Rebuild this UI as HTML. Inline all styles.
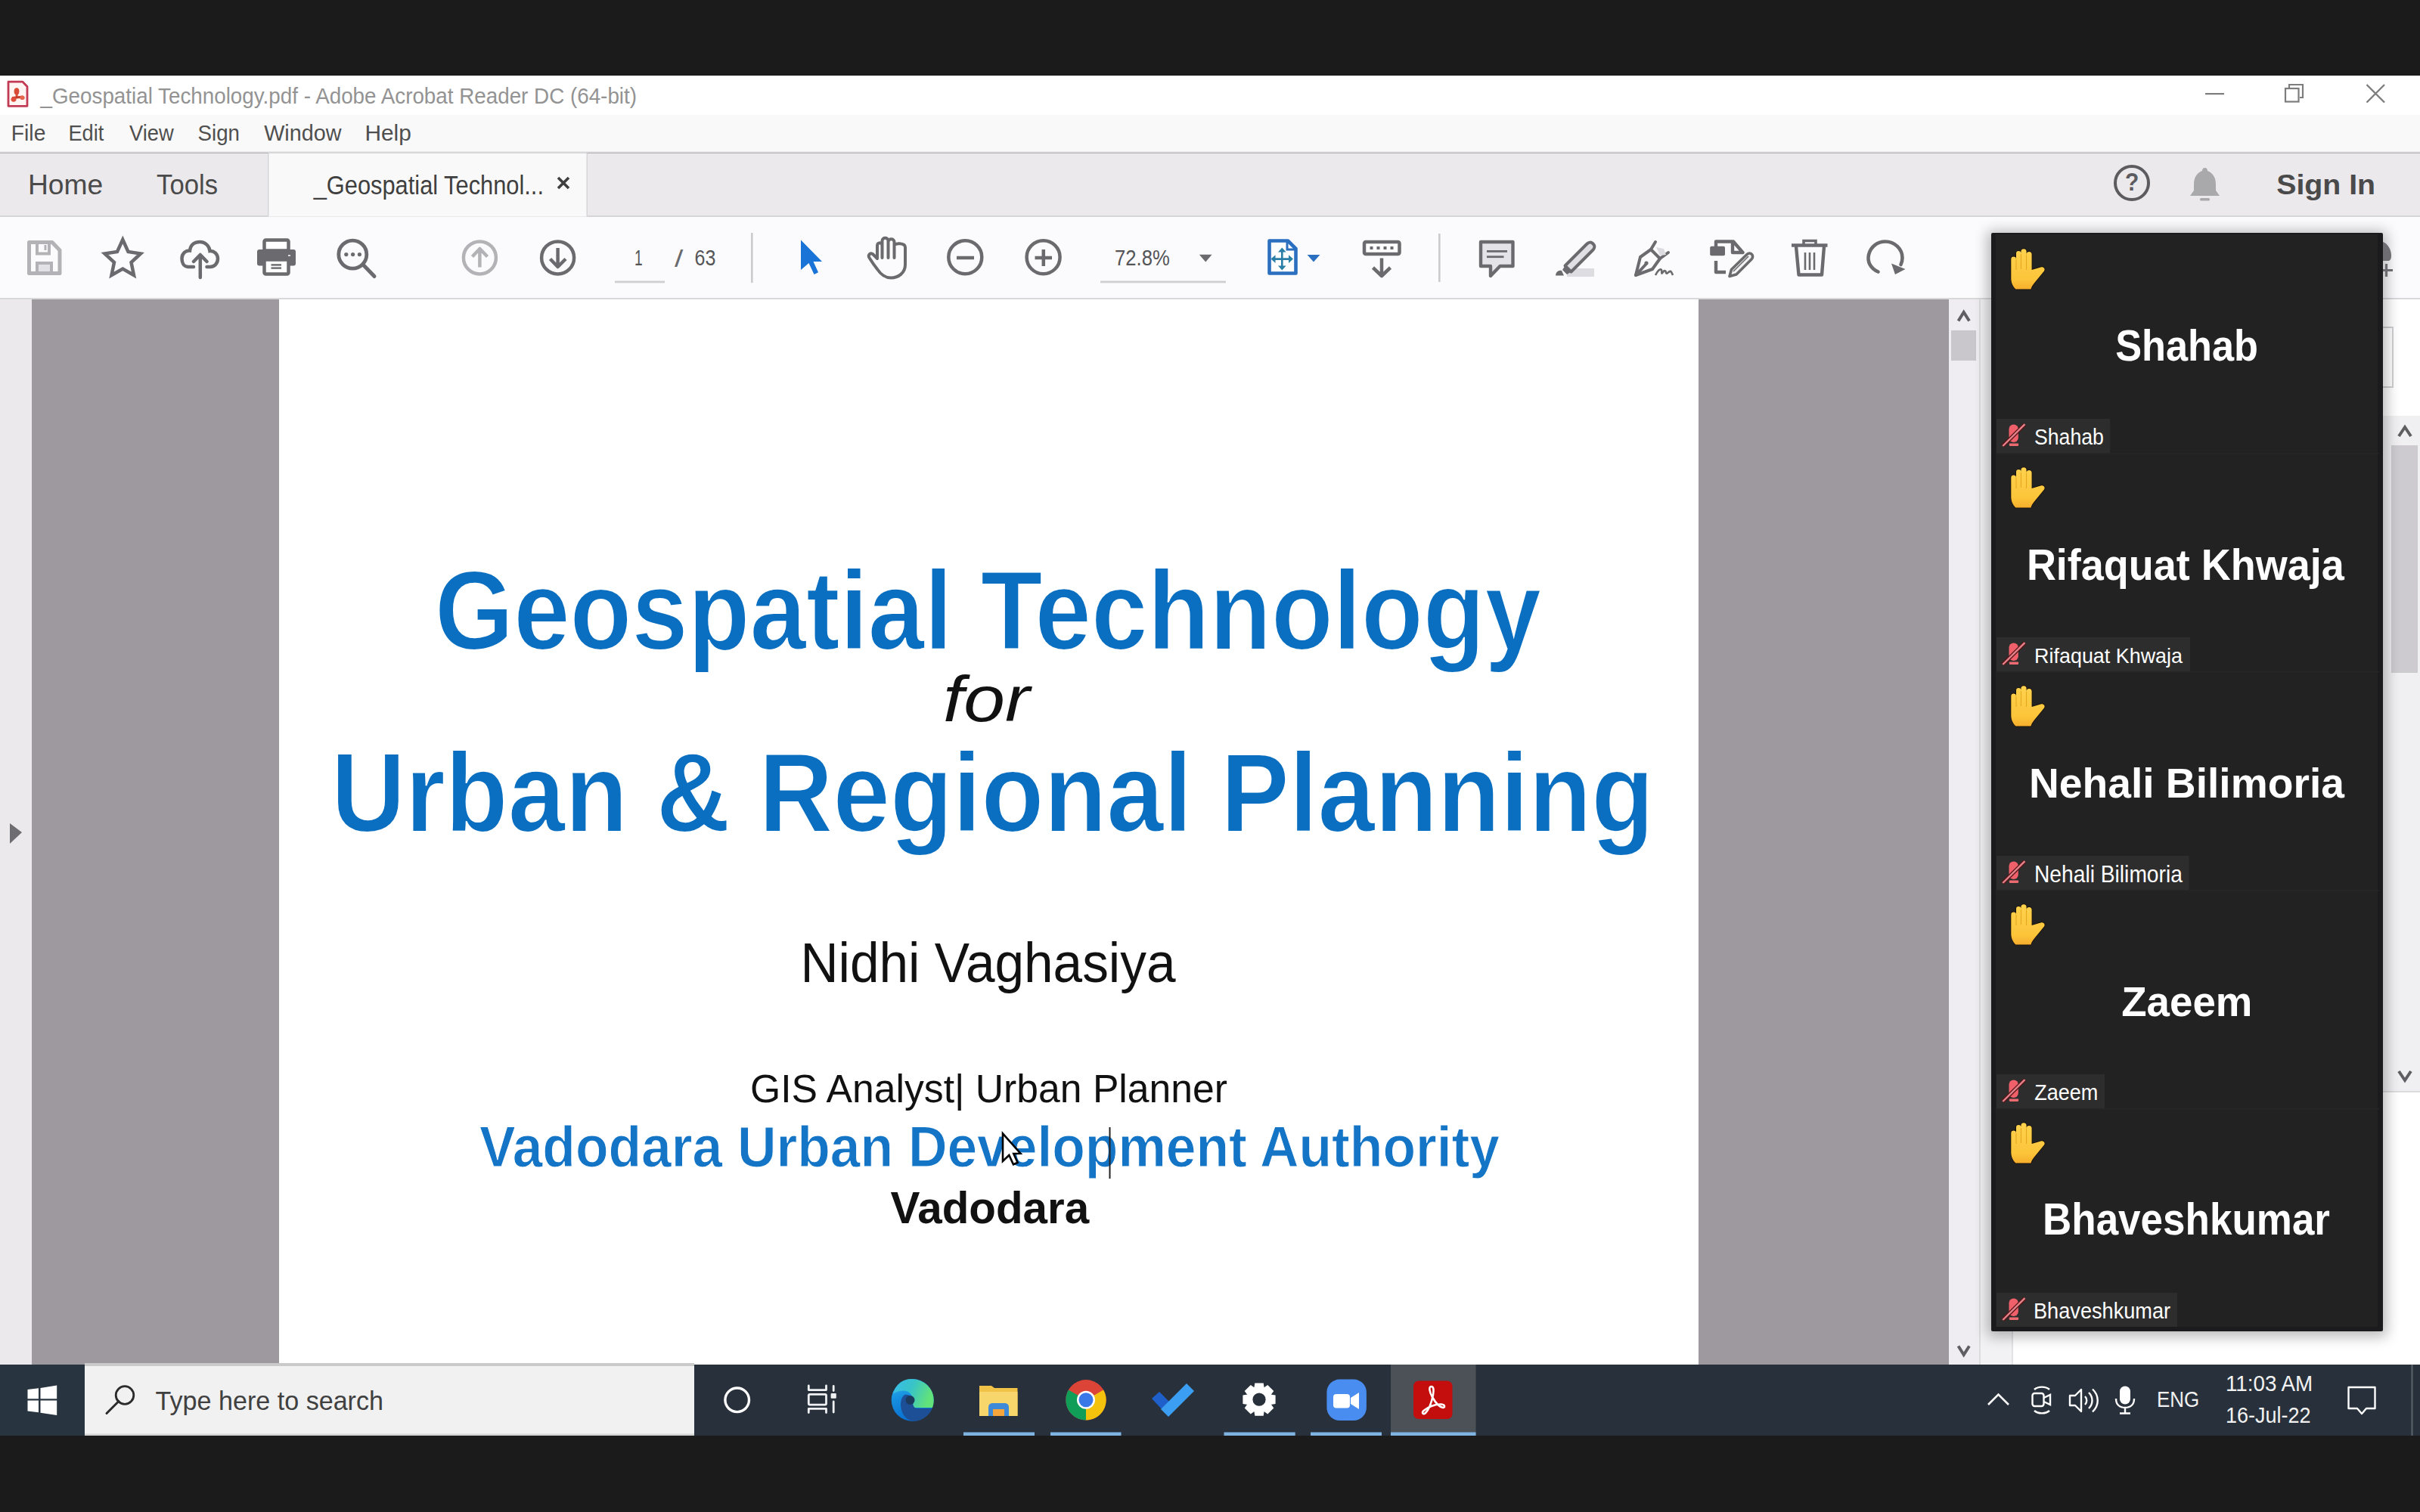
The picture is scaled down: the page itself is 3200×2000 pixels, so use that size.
<!DOCTYPE html>
<html><head><meta charset="utf-8"><style>
html,body{margin:0;padding:0;width:3200px;height:2000px;overflow:hidden;background:#1b1b1b;}
svg{display:block;font-family:"Liberation Sans",sans-serif;}
</style></head><body>
<svg width="3200" height="2000" viewBox="0 0 3200 2000">
<rect x="0" y="0" width="3200" height="2000" fill="#1b1b1b"/>
<rect x="0" y="100" width="3200" height="52" fill="#ffffff"/>
<rect x="0" y="152" width="3200" height="49" fill="#f9f9f9"/>
<rect x="0" y="200.5" width="3200" height="2" fill="#d9d8db"/>
<rect x="0" y="202.5" width="3200" height="83" fill="#ebe9ec"/>
<rect x="0" y="285" width="3200" height="2" fill="#d6d5d8"/>
<rect x="355" y="202.5" width="421" height="84" fill="#f9f9fa"/>
<rect x="354" y="202.5" width="1.5" height="84" fill="#d6d5d8"/>
<rect x="775.5" y="202.5" width="1.5" height="84" fill="#d6d5d8"/>
<rect x="0" y="287" width="3200" height="107" fill="#fbfbfd"/>
<rect x="0" y="394" width="3200" height="2" fill="#d8d7da"/>
<rect x="0" y="396" width="3200" height="1409" fill="#ffffff"/>
<rect x="0" y="396" width="42" height="1409" fill="#ebe9ec"/>
<rect x="42" y="396" width="2535" height="1409" fill="#9e999e"/>
<rect x="369" y="396" width="1877" height="1409" fill="#ffffff"/>
<rect x="2577" y="396" width="40" height="1409" fill="#efedf1"/>
<rect x="2617" y="396" width="2" height="1409" fill="#dcdbde"/>
<rect x="2619" y="396" width="41" height="1409" fill="#f2f1f4"/>
<rect x="2660" y="396" width="2" height="1409" fill="#e2e1e4"/>
<rect x="2580" y="437" width="33" height="40" fill="#c9c7cc"/>
<path d="M2589.5,424.5 L2596.7,413 L2604,424.5" fill="none" stroke="#5f5f63" stroke-width="4"/>
<path d="M2589.5,1780.5 L2596.7,1792 L2604,1780.5" fill="none" stroke="#5f5f63" stroke-width="4"/>
<path d="M13,1089 L29,1101 L13,1116 Z" fill="#6e6d71"/>
<rect x="3150" y="550" width="50" height="893" fill="#f0eff2"/>
<rect x="3162" y="589" width="35" height="301" fill="#cdcbd0"/>
<path d="M3172,577 L3180,565 L3188,577" fill="none" stroke="#5f5f63" stroke-width="4"/>
<path d="M3172,1417 L3180,1429 L3188,1417" fill="none" stroke="#5f5f63" stroke-width="4"/>
<rect x="3150" y="1443" width="50" height="2" fill="#dcdbde"/>
<rect x="3150" y="433" width="14" height="79" fill="none" stroke="#d0cfd2" stroke-width="2"/>
<text x="575.0" y="859.0" font-size="147.56" font-weight="bold" font-style="normal" fill="#0a6fc0" textLength="1463.0" lengthAdjust="spacingAndGlyphs" stroke="#ffffff" stroke-width="2">Geospatial Technology</text>
<text x="1247.0" y="954.0" font-size="85.52" font-weight="normal" font-style="italic" fill="#111111" textLength="114.7" lengthAdjust="spacingAndGlyphs" >for</text>
<text x="438.0" y="1100.0" font-size="148.26" font-weight="bold" font-style="normal" fill="#0a6fc0" textLength="1749.2" lengthAdjust="spacingAndGlyphs" stroke="#ffffff" stroke-width="2">Urban &amp; Regional Planning</text>
<text x="1058.5" y="1298.5" font-size="73.40" font-weight="normal" font-style="normal" fill="#111111" textLength="496.0" lengthAdjust="spacingAndGlyphs" >Nidhi Vaghasiya</text>
<text x="992.0" y="1458.0" font-size="51.58" font-weight="normal" font-style="normal" fill="#111111" textLength="631.0" lengthAdjust="spacingAndGlyphs" >GIS Analyst| Urban Planner</text>
<text x="634.0" y="1542.5" font-size="75.58" font-weight="bold" font-style="normal" fill="#1474c6" textLength="1349.0" lengthAdjust="spacingAndGlyphs" stroke="#ffffff" stroke-width="1">Vadodara Urban Development Authority</text>
<text x="1177.5" y="1618.0" font-size="59.59" font-weight="bold" font-style="normal" fill="#111111" textLength="262.6" lengthAdjust="spacingAndGlyphs" >Vadodara</text>
<rect x="1466.5" y="1491" width="2" height="68" fill="#222"/>
<rect x="0" y="1805" width="3200" height="94" fill="#28313b"/>
<rect x="0" y="1805" width="112" height="94" fill="#28343f"/>
<rect x="112" y="1803" width="806" height="96" fill="#f1f1f1"/>
<rect x="112" y="1803" width="806" height="4" fill="#cacaca"/>
<rect x="112" y="1896.5" width="806" height="2.5" fill="#d4d4d4"/>
<path d="M11,108.2 L30,108.2 L36,114.5 L36,140.3 L11,140.3 Z" fill="#fff5f3" stroke="#c23b55" stroke-width="2.8" stroke-linejoin="round"/>
<ellipse cx="22" cy="120.8" rx="3.4" ry="4.6" fill="#d84b35"/><rect x="20.6" y="123" width="3" height="6.5" fill="#d84b35"/>
<path d="M16,129.5 L30.5,128.2" stroke="#c8402c" stroke-width="3.2"/>
<ellipse cx="18" cy="131.6" rx="3.5" ry="3.1" fill="#e0503c"/><ellipse cx="29.5" cy="129.2" rx="3.2" ry="2.8" fill="#e6644c"/>
<text x="53.5" y="137.2" font-size="29.23" font-weight="normal" font-style="normal" fill="#939393" textLength="788.5" lengthAdjust="spacingAndGlyphs" >_Geospatial Technology.pdf - Adobe Acrobat Reader DC (64-bit)</text>
<rect x="2916" y="123" width="25" height="2.2" fill="#7d7d7d"/>
<rect x="3022" y="117" width="17.5" height="17.5" fill="none" stroke="#7d7d7d" stroke-width="2.2"/>
<path d="M3027,116 L3027,112 L3045,112 L3045,129 L3041,129" fill="none" stroke="#7d7d7d" stroke-width="2.2"/>
<path d="M3129.5,112 L3153,135.5 M3153,112 L3129.5,135.5" stroke="#7d7d7d" stroke-width="2.4"/>
<text x="14.8" y="186.2" font-size="29.80" font-weight="normal" font-style="normal" fill="#4f4f4f" textLength="45.6" lengthAdjust="spacingAndGlyphs" >File</text>
<text x="90.4" y="186.2" font-size="29.80" font-weight="normal" font-style="normal" fill="#4f4f4f" textLength="46.9" lengthAdjust="spacingAndGlyphs" >Edit</text>
<text x="171.0" y="186.2" font-size="29.80" font-weight="normal" font-style="normal" fill="#4f4f4f" textLength="58.7" lengthAdjust="spacingAndGlyphs" >View</text>
<text x="261.6" y="186.2" font-size="29.37" font-weight="normal" font-style="normal" fill="#4f4f4f" textLength="55.4" lengthAdjust="spacingAndGlyphs" >Sign</text>
<text x="349.2" y="186.2" font-size="29.80" font-weight="normal" font-style="normal" fill="#4f4f4f" textLength="102.3" lengthAdjust="spacingAndGlyphs" >Window</text>
<text x="482.4" y="186.2" font-size="29.80" font-weight="normal" font-style="normal" fill="#4f4f4f" textLength="61.4" lengthAdjust="spacingAndGlyphs" >Help</text>
<text x="36.9" y="256.7" font-size="37.50" font-weight="normal" font-style="normal" fill="#4a4a4a" textLength="99.3" lengthAdjust="spacingAndGlyphs" >Home</text>
<text x="207.1" y="256.7" font-size="37.50" font-weight="normal" font-style="normal" fill="#4a4a4a" textLength="81.0" lengthAdjust="spacingAndGlyphs" >Tools</text>
<text x="414.7" y="256.7" font-size="34.53" font-weight="normal" font-style="normal" fill="#3f3f3f" textLength="304.3" lengthAdjust="spacingAndGlyphs" >_Geospatial Technol...</text>
<path d="M738,235 L752,249 M752,235 L738,249" stroke="#3f3f3f" stroke-width="3.6"/>
<text x="3010.2" y="257.0" font-size="37.25" font-weight="bold" font-style="normal" fill="#4a4a4a" textLength="130.9" lengthAdjust="spacingAndGlyphs" >Sign In</text>
<circle cx="2819" cy="242" r="22" fill="none" stroke="#5c5c60" stroke-width="4"/>
<text x="2810.0" y="252.0" font-size="32.95" font-weight="bold" font-style="normal" fill="#5c5c60" textLength="18.3" lengthAdjust="spacingAndGlyphs" >?</text>
<path d="M2915.5,222 C2913,222 2912,224 2912,226 C2904,229 2901,236 2901,244 L2901,252 L2896,259 L2935,259 L2930,252 L2930,244 C2930,236 2927,229 2919,226 C2919,224 2918,222 2915.5,222 Z" fill="#a9a8ab"/>
<rect x="2909" y="262" width="13" height="3.5" rx="1.5" fill="#a9a8ab"/>
<path d="M38.5,320.5 L69,320.5 L79,331 L79,361.5 L38.5,361.5 Z" fill="none" stroke="#b3b2b6" stroke-width="5" stroke-linejoin="round"/>
<rect x="49" y="320" width="16" height="15.5" fill="none" stroke="#b3b2b6" stroke-width="4"/>
<rect x="58.5" y="324" width="3" height="7" fill="#b3b2b6"/>
<rect x="49" y="348" width="19" height="13" fill="#e2e1e5" stroke="#b3b2b6" stroke-width="4"/>
<path d="M162.3,317 L169.5,333 L186,335.5 L173.5,347 L177,364 L162.3,355.5 L147.5,364 L151,347 L138.5,335.5 L155,333 Z" fill="none" stroke="#6b6b6f" stroke-width="4.5" stroke-linejoin="miter"/>
<path d="M256,353 L249,353 C242,353 240.5,346 240.5,342 C240.5,335 246,331 251,331.5 C252,323 258,320 264,320 C272,320 277,326 277.5,332 C283,331.5 288,336 288,342 C288,348 284,353 278,353 L273.5,353" fill="none" stroke="#6b6b6f" stroke-width="4.5" stroke-linecap="round"/>
<path d="M264.8,367 L264.8,338 M256,346 L264.8,337 L273.5,346" fill="none" stroke="#6b6b6f" stroke-width="4.5" stroke-linecap="round" stroke-linejoin="round"/>
<rect x="349.5" y="317.5" width="32" height="14" rx="2" fill="#fff" stroke="#6b6b6f" stroke-width="4.5"/>
<rect x="340" y="330" width="51" height="21.5" rx="3" fill="#6b6b6f"/>
<rect x="349.5" y="343.5" width="32" height="19" rx="2" fill="#fff" stroke="#6b6b6f" stroke-width="4.5"/>
<rect x="358.5" y="349.2" width="13.5" height="2.4" fill="#6b6b6f"/><rect x="358.5" y="353.4" width="13.5" height="2.4" fill="#6b6b6f"/>
<rect x="381" y="337" width="3" height="2" fill="#ddd"/>
<circle cx="466.3" cy="336.6" r="18.5" fill="none" stroke="#6b6b6f" stroke-width="4.8"/>
<path d="M480,350 L495,365.5" stroke="#6b6b6f" stroke-width="5" stroke-linecap="round"/>
<circle cx="457.8" cy="336.6" r="2.6" fill="#6b6b6f"/><circle cx="466.6" cy="336.6" r="2.6" fill="#6b6b6f"/><circle cx="475.4" cy="336.6" r="2.6" fill="#6b6b6f"/>
<circle cx="634.4" cy="340.9" r="21.5" fill="none" stroke="#b3b2b6" stroke-width="4.5"/>
<path d="M634.4,353.5 L634.4,329 M624.5,339.5 L634.4,329 L644.5,339.5" fill="none" stroke="#b3b2b6" stroke-width="4.5" stroke-linejoin="round"/>
<circle cx="737.6" cy="340.9" r="21.5" fill="none" stroke="#6b6b6f" stroke-width="4.5"/>
<path d="M737.6,328 L737.6,353 M727.5,342.5 L737.6,353 L748,342.5" fill="none" stroke="#6b6b6f" stroke-width="4.5" stroke-linejoin="round"/>
<text x="839.0" y="350.9" font-size="30.38" font-weight="normal" font-style="normal" fill="#555558" textLength="10.7" lengthAdjust="spacingAndGlyphs" >1</text>
<text x="892.0" y="352.7" font-size="31.31" font-weight="normal" font-style="normal" fill="#6a6a6e" textLength="11.3" lengthAdjust="spacingAndGlyphs" >/</text>
<text x="918.5" y="350.6" font-size="30.23" font-weight="normal" font-style="normal" fill="#555558" textLength="27.8" lengthAdjust="spacingAndGlyphs" >63</text>
<rect x="813" y="371.5" width="66" height="2.8" fill="#cfced3"/>
<rect x="993" y="308" width="2.6" height="66" fill="#cbcacf"/>
<rect x="1902" y="309" width="2.6" height="64" fill="#cbcacf"/>
<path d="M1059,317.5 L1059,357 L1069.5,348 L1076.5,363 L1082,360.3 L1075.5,346 L1087,346 Z" fill="#1a73d6"/>
<path d="M1160,356 C1156,351 1152,345 1149.5,341 C1147.5,337.5 1150,334 1154,336 L1160,342 L1160,325 C1160,320 1166.5,320 1166.5,325 L1166.5,341 L1166.5,318.5 C1166.5,313.5 1174.5,313.5 1174.5,318.5 L1174.5,341 L1174.5,320 C1174.5,315 1182.5,315 1182.5,320 L1182.5,341 L1182.5,325 C1182.5,321 1197,321 1197,327 L1197,350 C1197,361 1188,367.5 1178,367.5 C1170,367.5 1164,362 1160,356 Z" fill="none" stroke="#6b6b6f" stroke-width="4" stroke-linejoin="round"/>
<circle cx="1276.3" cy="340.2" r="22" fill="none" stroke="#6b6b6f" stroke-width="4.5"/>
<path d="M1265,341 L1288,341" stroke="#6b6b6f" stroke-width="4.5"/>
<circle cx="1379.6" cy="340.2" r="22" fill="none" stroke="#6b6b6f" stroke-width="4.5"/>
<path d="M1368.5,341 L1391,341 M1379.8,330 L1379.8,352" stroke="#6b6b6f" stroke-width="4.5"/>
<text x="1474.1" y="350.6" font-size="30.23" font-weight="normal" font-style="normal" fill="#555558" textLength="72.7" lengthAdjust="spacingAndGlyphs" >72.8%</text>
<path d="M1585.8,336.7 L1602.6,336.7 L1594.2,346.6 Z" fill="#6b6b6f"/>
<rect x="1455" y="371.5" width="166" height="2.8" fill="#cfced3"/>
<path d="M1678.5,318.5 L1703,318.5 L1713.5,329 L1713.5,361.5 L1678.5,361.5 Z" fill="#fff" stroke="#2a6fc0" stroke-width="4.6" stroke-linejoin="round"/>
<path d="M1702,318.5 L1702,330 L1713.5,330" fill="none" stroke="#2a6fc0" stroke-width="3"/>
<path d="M1695.3,331 L1695.3,354 M1684,342.6 L1707,342.6" stroke="#2a7fa6" stroke-width="2.6"/>
<path d="M1690,333.5 L1695.3,327.5 L1700.6,333.5 Z M1690,351.5 L1695.3,357.5 L1700.6,351.5 Z M1686.5,337.3 L1680.5,342.6 L1686.5,347.9 Z M1704,337.3 L1710,342.6 L1704,347.9 Z" fill="#2a7fa6"/>
<path d="M1728.6,337 L1745.4,337 L1737,346.6 Z" fill="#2a6fc0"/>
<rect x="1804" y="320" width="46.5" height="16" rx="2" fill="#fff" stroke="#6b6b6f" stroke-width="4.5"/>
<rect x="1811.5" y="326" width="4" height="4" fill="#6b6b6f"/>
<rect x="1820.5" y="326" width="4" height="4" fill="#6b6b6f"/>
<rect x="1829.5" y="326" width="4" height="4" fill="#6b6b6f"/>
<rect x="1838.5" y="326" width="4" height="4" fill="#6b6b6f"/>
<path d="M1827,341.5 L1827,365 M1815.5,354 L1827,365 L1838.5,354" fill="none" stroke="#6b6b6f" stroke-width="4.5" stroke-linejoin="round"/>
<path d="M1958,320 L2000.5,320 L2000.5,352 L1983.5,352 L1971,365 L1971,352 L1958,352 Z" fill="#e4e3e8" stroke="#6b6b6f" stroke-width="4.4" stroke-linejoin="round"/>
<rect x="1966" y="331" width="27" height="2.8" fill="#6b6b6f"/><rect x="1966" y="338.3" width="22.5" height="2.8" fill="#6b6b6f"/>
<rect x="2072" y="355" width="36" height="11" fill="#dddce1"/>
<path d="M2069.5,351.5 L2098,323 C2101,320 2104,320 2106,322 L2107,323 C2109,325 2109,328 2106,331 L2077.5,359.5 Z" fill="#e0dfe4" stroke="#6b6b6f" stroke-width="4" stroke-linejoin="round"/>
<path d="M2069.5,351.5 L2077.5,359.5 L2072,363 L2066,357 Z" fill="#6b6b6f"/>
<path d="M2057,364.5 C2057,360 2061,356.5 2065,358 L2068,364.5 Z" fill="#6b6b6f"/>
<path d="M2163,364 L2169,340 L2183,330 L2195,342 L2185,356 Z" fill="none" stroke="#6b6b6f" stroke-width="4" stroke-linejoin="round"/>
<path d="M2163,364 L2176,350 M2183,330 L2189,320 M2195,342 L2206,334" fill="none" stroke="#6b6b6f" stroke-width="4" stroke-linecap="round"/>
<circle cx="2177" cy="348" r="2.6" fill="#6b6b6f"/>
<path d="M2190,327 L2200,329 L2203,337 L2195,338 Z" fill="#dddce1"/>
<path d="M2189,364 C2192,358 2195,355 2197,357 C2198,360 2196,364 2199,360 C2201,357 2203,358 2203,361 C2204,363 2206,360 2208,359 C2210,358 2211,362 2212,364" fill="none" stroke="#6b6b6f" stroke-width="2.6"/>
<path d="M2269,326 L2269,319.5 L2292,319.5 L2304.5,334 L2291,334 L2291,319.5" fill="none" stroke="#6b6b6f" stroke-width="4.4" stroke-linejoin="round"/>
<path d="M2269,345 L2269,360 L2282,360" fill="none" stroke="#6b6b6f" stroke-width="4.4" stroke-linejoin="round"/>
<rect x="2261.2" y="325.8" width="19.8" height="12.5" rx="2" fill="#6b6b6f"/>
<path d="M2287,365.5 L2289.5,356.5 L2310,336.5 C2312,334.5 2315,334.5 2316.5,336.5 C2318,338 2318,341 2316,343 L2296,363 Z" fill="#f2f2f4" stroke="#6b6b6f" stroke-width="3.6" stroke-linejoin="round"/>
<path d="M2292,359 L2312,339" stroke="#6b6b6f" stroke-width="1.6"/>
<path d="M2369,324.5 L2416.5,324.5" stroke="#6b6b6f" stroke-width="4.4"/>
<path d="M2385,323 L2385,318.5 L2401,318.5 L2401,323" fill="none" stroke="#6b6b6f" stroke-width="3.6"/>
<path d="M2375,326 L2378.5,363.5 L2409,363.5 L2412,326" fill="none" stroke="#6b6b6f" stroke-width="4.4" stroke-linejoin="round"/>
<path d="M2387,334 L2387,357 M2393,334 L2393,357 M2399,334 L2399,357" stroke="#6b6b6f" stroke-width="2.6"/>
<path d="M2483.5,359.5 C2473,355 2469,346 2471,337 C2473.5,326 2483,319.5 2493,319.5 C2505.5,319.5 2515.5,329.5 2515.5,341 C2515.5,344 2515,347 2513.5,350" fill="none" stroke="#6b6b6f" stroke-width="4.6" stroke-linecap="round"/>
<path d="M2501,348.5 L2519.5,356 L2506,363 Z" fill="#6b6b6f"/>
<defs><filter id="shadow" x="-10%" y="-10%" width="120%" height="120%"><feGaussianBlur stdDeviation="9"/></filter><linearGradient id="handg" x1="0" y1="0" x2="0" y2="1"><stop offset="0" stop-color="#ffd24e"/><stop offset="0.75" stop-color="#fcc53a"/><stop offset="1" stop-color="#f6ae2c"/></linearGradient><symbol id="hand" viewBox="0 0 46 56" overflow="visible"><path d="M7.3,54.6 C3.5,50.5 1.3,46 1.3,40 L1.3,14.9 A3.35,3.35 0 0 1 8,14.9 L8,7.3 A3.2,3.2 0 0 1 14.4,7.3 L14.4,4.8 A3.6,3.6 0 0 1 21.6,4.8 L21.6,8.5 A3.5,3.5 0 0 1 28.6,8.5 L28.6,29 L40.5,25.5 C44,24.5 47,27.5 45,30.5 L31.5,47 C29.5,49.5 28,52 27.5,54.6 Z" fill="url(#handg)" stroke="#140c04" stroke-width="1.4" stroke-linejoin="round" paint-order="stroke"/><path d="M8,15 L8,29 M14.4,8 L14.4,28 M21.6,8.5 L21.6,29" stroke="#e3a41d" stroke-width="1" fill="none"/></symbol><symbol id="mic" viewBox="0 0 32 32" overflow="visible"><rect x="9" y="0" width="12.3" height="23.5" rx="6" fill="#f0606a"/><rect x="9.4" y="25" width="12.2" height="3.4" rx="0.8" fill="#ec6b70"/><path d="M0.8,28.5 L30,-0.3" stroke="#5a1414" stroke-width="5"/><path d="M0.8,28.5 L30,-0.3" stroke="#e3838e" stroke-width="2.4"/></symbol></defs>
<rect x="2628" y="306" width="528" height="1462" rx="4" fill="#000" opacity="0.28" filter="url(#shadow)"/>
<rect x="2633" y="308" width="518" height="1453" rx="2" fill="#1b1b1d"/>
<rect x="2639" y="310" width="505" height="1445" fill="#222222"/>
<use href="#hand" x="2658" y="328" width="46" height="56"/>
<text x="2797.2" y="477.0" font-size="56.59" font-weight="bold" font-style="normal" fill="#ffffff" textLength="188.8" lengthAdjust="spacingAndGlyphs" >Shahab</text>
<rect x="2640" y="554" width="150.3" height="45" fill="#2d2d2d"/>
<rect x="2639" y="599" width="507" height="1.5" fill="#262626"/>
<use href="#mic" x="2647.5" y="561.5" width="32" height="32"/>
<text x="2690.0" y="587.8" font-size="28.69" font-weight="normal" font-style="normal" fill="#ffffff" textLength="91.9" lengthAdjust="spacingAndGlyphs" >Shahab</text>
<use href="#hand" x="2658" y="617" width="46" height="56"/>
<text x="2679.9" y="767.0" font-size="56.69" font-weight="bold" font-style="normal" fill="#ffffff" textLength="419.9" lengthAdjust="spacingAndGlyphs" >Rifaquat Khwaja</text>
<rect x="2640" y="843" width="256.0" height="45" fill="#2d2d2d"/>
<rect x="2639" y="888" width="507" height="1.5" fill="#262626"/>
<use href="#mic" x="2647.5" y="850.5" width="32" height="32"/>
<text x="2690.1" y="877.3" font-size="28.05" font-weight="normal" font-style="normal" fill="#ffffff" textLength="195.9" lengthAdjust="spacingAndGlyphs" >Rifaquat Khwaja</text>
<use href="#hand" x="2658" y="906" width="46" height="56"/>
<text x="2683.0" y="1054.5" font-size="56.25" font-weight="bold" font-style="normal" fill="#ffffff" textLength="416.9" lengthAdjust="spacingAndGlyphs" >Nehali Bilimoria</text>
<rect x="2640" y="1132" width="254.7" height="45" fill="#2d2d2d"/>
<rect x="2639" y="1177" width="507" height="1.5" fill="#262626"/>
<use href="#mic" x="2647.5" y="1139.5" width="32" height="32"/>
<text x="2690.0" y="1166.6" font-size="31.40" font-weight="normal" font-style="normal" fill="#ffffff" textLength="195.9" lengthAdjust="spacingAndGlyphs" >Nehali Bilimoria</text>
<use href="#hand" x="2658" y="1195" width="46" height="56"/>
<text x="2805.2" y="1344.0" font-size="56.10" font-weight="bold" font-style="normal" fill="#ffffff" textLength="173.3" lengthAdjust="spacingAndGlyphs" >Zaeem</text>
<rect x="2640" y="1421" width="143.0" height="45" fill="#2d2d2d"/>
<rect x="2639" y="1466" width="507" height="1.5" fill="#262626"/>
<use href="#mic" x="2647.5" y="1428.5" width="32" height="32"/>
<text x="2690.2" y="1455.0" font-size="29.07" font-weight="normal" font-style="normal" fill="#ffffff" textLength="84.2" lengthAdjust="spacingAndGlyphs" >Zaeem</text>
<use href="#hand" x="2658" y="1484" width="46" height="56"/>
<text x="2701.0" y="1632.7" font-size="59.16" font-weight="bold" font-style="normal" fill="#ffffff" textLength="380.0" lengthAdjust="spacingAndGlyphs" >Bhaveshkumar</text>
<rect x="2640" y="1710" width="239.0" height="45" fill="#2d2d2d"/>
<use href="#mic" x="2647.5" y="1717.5" width="32" height="32"/>
<text x="2689.0" y="1743.9" font-size="28.92" font-weight="normal" font-style="normal" fill="#ffffff" textLength="181.1" lengthAdjust="spacingAndGlyphs" >Bhaveshkumar</text>
<path d="M3151,320 C3157,322 3162,330 3162,338 C3162,342 3161,344 3159,345 L3151,345 Z" fill="#6e6d72"/>
<path d="M3155.5,349 L3155.5,366 M3151,357.5 L3164,357.5" stroke="#6b6b6f" stroke-width="3.2"/>
<path d="M36.5,1838 L51,1836.2 L51,1850.2 L36.5,1850.2 Z M53.5,1835.9 L75.2,1832.6 L75.2,1850.2 L53.5,1850.2 Z M36.5,1852.4 L51,1852.4 L51,1868.3 L36.5,1866.5 Z M53.5,1852.4 L75.2,1852.4 L75.2,1871.9 L53.5,1868.8 Z" fill="#ffffff"/>
<circle cx="165" cy="1845.5" r="11.8" fill="none" stroke="#2b2b2b" stroke-width="2.8"/>
<path d="M157,1853.5 L141,1869.5" stroke="#2b2b2b" stroke-width="3" stroke-linecap="round"/>
<text x="205.6" y="1865.4" font-size="35.90" font-weight="normal" font-style="normal" fill="#404040" textLength="301.4" lengthAdjust="spacingAndGlyphs" >Type here to search</text>
<circle cx="974.7" cy="1851.8" r="15.8" fill="none" stroke="#ffffff" stroke-width="3.4"/>
<path d="M1069.3,1833 L1069.3,1838.6 L1092.5,1838.6 L1092.5,1833 M1069.3,1868.5 L1069.3,1863.4 L1092.5,1863.4 L1092.5,1868.5" fill="none" stroke="#eef0f2" stroke-width="2.8" stroke-linecap="round" stroke-linejoin="round"/>
<rect x="1069.3" y="1844.3" width="23.2" height="13.8" rx="1.5" fill="none" stroke="#eef0f2" stroke-width="2.8"/>
<path d="M1102.2,1833.5 L1102.2,1839.5 M1102.2,1854 L1102.2,1868" stroke="#eef0f2" stroke-width="2.8" stroke-linecap="round"/>
<rect x="1098.6" y="1843" width="7.2" height="6.8" rx="1" fill="#eef0f2"/>
<defs><linearGradient id="edgeg" x1="0" y1="1" x2="1" y2="0"><stop offset="0" stop-color="#0c59a4"/><stop offset="0.5" stop-color="#1b8ddb"/><stop offset="1" stop-color="#5ad26a"/></linearGradient><radialGradient id="chr" cx="0.5" cy="0.5" r="0.5"><stop offset="0" stop-color="#fff"/></radialGradient></defs>
<defs><linearGradient id="eg1" x1="0" y1="0" x2="0.3" y2="1"><stop offset="0" stop-color="#38bdf0"/><stop offset="0.45" stop-color="#1690e0"/><stop offset="1" stop-color="#0a6fd0"/></linearGradient><linearGradient id="eg2" x1="0" y1="0" x2="1" y2="0.3"><stop offset="0" stop-color="#38bdec"/><stop offset="0.5" stop-color="#38c4c8"/><stop offset="1" stop-color="#62e27a"/></linearGradient></defs>
<circle cx="1206.7" cy="1852" r="28" fill="url(#eg1)"/>
<path d="M1200,1824.6 C1218,1822 1234.7,1834 1234.7,1852 C1234.7,1856 1234,1859 1233,1862 L1210,1862 C1206,1862 1204,1858 1206,1854 C1208,1846 1203,1840 1195,1839.5 C1189,1839.5 1184,1841 1181,1844 C1184,1833 1191,1826.5 1200,1824.6 Z" fill="url(#eg2)"/>
<path d="M1196,1845 C1203,1844 1207,1848 1207,1854 C1207,1860 1209,1863 1213,1863 L1232.5,1863 C1229,1871 1222,1877 1213,1879.5 C1204,1881 1196,1876 1193,1868 C1190,1860 1190,1850 1196,1845 Z" fill="#1d4f96"/>
<circle cx="1203.5" cy="1852" r="6" fill="#1b3a5c"/>
<path d="M1295,1833 L1311,1833 L1315,1836 L1345.5,1836 L1345.5,1873 L1295,1873 Z" fill="#f0c247"/>
<rect x="1295" y="1841" width="50.5" height="32" fill="#f7d66b"/>
<path d="M1307,1873 L1307,1862 C1307,1858 1309,1856 1313,1856 L1328,1856 C1332,1856 1334,1858 1334,1862 L1334,1873 L1328,1873 L1328,1864 L1313,1864 L1313,1873 Z" fill="#3f8ad8"/>
<rect x="1313" y="1864" width="15" height="9" fill="#f5a53b"/>
<circle cx="1436" cy="1851.8" r="26.7" fill="#db4437"/>
<path d="M1436,1851.8 L1459.1,1838.45 A26.7,26.7 0 0 1 1436,1878.5 Z" fill="#f4c20d"/>
<path d="M1436,1851.8 L1436,1878.5 A26.7,26.7 0 0 1 1412.9,1838.45 Z" fill="#0f9d58"/>
<circle cx="1436" cy="1851.8" r="12" fill="#ffffff"/><circle cx="1436" cy="1851.8" r="9.5" fill="#3b78e7"/>
<path d="M1523,1850 L1533,1841 L1548,1856 L1538,1866 Z" fill="#1e5fc9"/>
<path d="M1535,1864 L1569,1830 L1579,1840 L1545,1874 Z" fill="#3c9ef2"/>
<path d="M1686.6,1845.5 L1686.6,1856.9 L1680.1,1857.9 L1680.4,1857.1 L1684.3,1862.4 L1676.2,1870.5 L1670.9,1866.6 L1671.7,1866.3 L1670.7,1872.8 L1659.3,1872.8 L1658.3,1866.3 L1659.1,1866.6 L1653.8,1870.5 L1645.7,1862.4 L1649.6,1857.1 L1649.9,1857.9 L1643.4,1856.9 L1643.4,1845.5 L1649.9,1844.5 L1649.6,1845.3 L1645.7,1840.0 L1653.8,1831.9 L1659.1,1835.8 L1658.3,1836.1 L1659.3,1829.6 L1670.7,1829.6 L1671.7,1836.1 L1670.9,1835.8 L1676.2,1831.9 L1684.3,1840.0 L1680.4,1845.3 L1680.1,1844.5 Z" fill="#ffffff"/>
<circle cx="1665" cy="1851.2" r="8.6" fill="#28313b"/>
<rect x="1754.4" y="1824.6" width="52.5" height="54.4" rx="17" fill="#4a8df0"/>
<rect x="1763" y="1844" width="22" height="18.4" rx="4" fill="#ffffff"/>
<path d="M1786,1849 L1797,1842 L1797,1864 L1786,1857 Z" fill="#ffffff"/>
<rect x="1839" y="1805" width="112.5" height="94" fill="#4b5157"/>
<rect x="1869" y="1826.5" width="51.5" height="50.5" rx="7" fill="#c40d0d"/>
<path d="M1892.5,1834 C1889,1834 1890,1841 1894,1848 C1898,1855 1903,1861 1908,1862 C1911,1862 1911,1858 1906,1857.5 C1898,1857 1888,1861 1882.5,1866 C1879.5,1869 1882,1872 1885,1869 C1889,1865 1893,1855 1895,1845 C1896,1839 1896,1834 1892.5,1834 Z" fill="none" stroke="#ffffff" stroke-width="2.6"/>
<rect x="1274" y="1894.5" width="94" height="4.5" fill="#7fb3e2"/>
<rect x="1389" y="1894.5" width="93.5" height="4.5" fill="#7fb3e2"/>
<rect x="1618.5" y="1894.5" width="94.20000000000005" height="4.5" fill="#7fb3e2"/>
<rect x="1733" y="1894.5" width="94" height="4.5" fill="#7fb3e2"/>
<rect x="1839" y="1894.5" width="112.5" height="4.5" fill="#7fb3e2"/>
<path d="M2629,1858 L2642.5,1844.5 L2656,1858" fill="none" stroke="#fff" stroke-width="2.6"/>
<rect x="2687.5" y="1843" width="15" height="17" rx="3" fill="none" stroke="#fff" stroke-width="2.4"/>
<path d="M2702.5,1849 L2711,1845 L2711,1858 L2702.5,1854" fill="none" stroke="#fff" stroke-width="2.4"/>
<path d="M2690,1838 C2695,1833.5 2705,1833.5 2710,1838 M2690,1866 C2695,1870.5 2705,1870.5 2710,1866" fill="none" stroke="#fff" stroke-width="2.4"/>
<path d="M2737,1846 L2744,1846 L2752,1838 L2752,1867 L2744,1859 L2737,1859 Z" fill="none" stroke="#fff" stroke-width="2.4" stroke-linejoin="round"/>
<path d="M2757,1847 C2760,1850 2760,1855 2757,1858 M2762,1842 C2768,1848 2768,1857 2762,1863 M2767,1837.5 C2776,1846 2776,1859 2767,1867.5" fill="none" stroke="#fff" stroke-width="2.4"/>
<rect x="2803" y="1833.5" width="14" height="24" rx="7" fill="#fff"/>
<path d="M2798,1850 C2798,1858 2803,1862 2810,1862 C2817,1862 2822,1858 2822,1850 M2810,1862 L2810,1869.5 M2803,1869.5 L2817,1869.5" fill="none" stroke="#fff" stroke-width="2.4"/>
<text x="2852.0" y="1860.7" font-size="28.63" font-weight="normal" font-style="normal" fill="#f2f2f2" textLength="56.2" lengthAdjust="spacingAndGlyphs" >ENG</text>
<text x="2942.9" y="1839.7" font-size="28.92" font-weight="normal" font-style="normal" fill="#f2f2f2" textLength="115.3" lengthAdjust="spacingAndGlyphs" >11:03 AM</text>
<text x="2942.9" y="1881.8" font-size="28.78" font-weight="normal" font-style="normal" fill="#f2f2f2" textLength="112.7" lengthAdjust="spacingAndGlyphs" >16-Jul-22</text>
<path d="M3105.5,1835 L3140.5,1835 L3140.5,1863 L3129,1863 L3123,1870 L3117,1863 L3105.5,1863 Z" fill="none" stroke="#fff" stroke-width="2.4" stroke-linejoin="round"/>
<rect x="3188.5" y="1805" width="2" height="94" fill="#5b636b"/>
<path d="M1326,1499.5 L1326,1536 L1334.3,1528 L1340,1540.3 L1345.6,1537.8 L1340.3,1526 L1349.5,1525.8 Z" fill="#ffffff" stroke="#000000" stroke-width="2.6" stroke-linejoin="miter"/>
</svg>
</body></html>
